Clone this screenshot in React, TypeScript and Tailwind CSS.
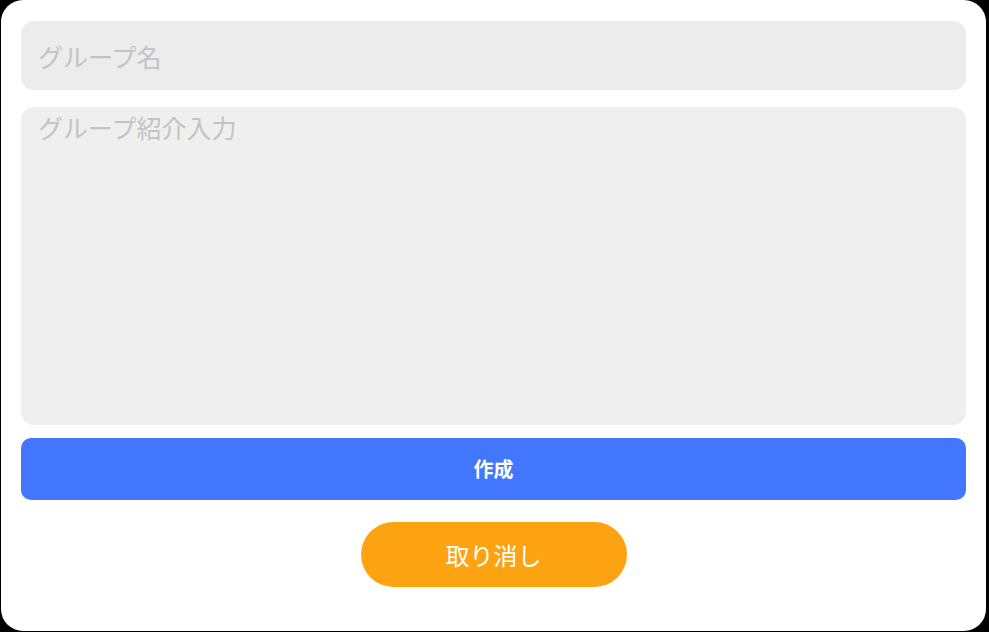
import { useState } from 'react';

export default function App() {
  const [name, setName] = useState('');
  const [intro, setIntro] = useState('');

  return (
    <div
      className="w-[989px] h-[632px] bg-black overflow-hidden"
      style={{ fontFamily: '"Noto Sans CJK JP", "Noto Sans", sans-serif' }}
    >
      <div className="ml-[1px] mr-[3px] h-[631px] bg-white rounded-[22px] px-[20px] pt-[21px] flex flex-col">
        {/* Group name */}
        <input
          type="text"
          value={name}
          onChange={(e) => setName(e.target.value)}
          placeholder="グループ名"
          className="w-full h-[69px] bg-[#ececec] rounded-[13px] px-[17px] pt-[1px] text-[25px] text-[#333] placeholder-[#c3c3c3] outline-none"
        />

        {/* Group intro */}
        <textarea
          value={intro}
          onChange={(e) => setIntro(e.target.value)}
          placeholder="グループ紹介入力"
          className="w-full h-[318px] mt-[17px] bg-[#efefef] rounded-[13px] px-[17px] pt-[5px] text-[25px] leading-[30px] text-[#333] placeholder-[#c3c3c3] outline-none resize-none"
        />

        {/* Create */}
        <button className="w-full h-[62px] mt-[13px] bg-[#4176fd] rounded-[10px] text-white text-[20px] font-bold">
          作成
        </button>

        {/* Cancel */}
        <div className="flex justify-center mt-[22px]">
          <button className="w-[266px] h-[65px] bg-[#fda312] rounded-full text-white text-[24px]">
            取り消し
          </button>
        </div>
      </div>
    </div>
  );
}
